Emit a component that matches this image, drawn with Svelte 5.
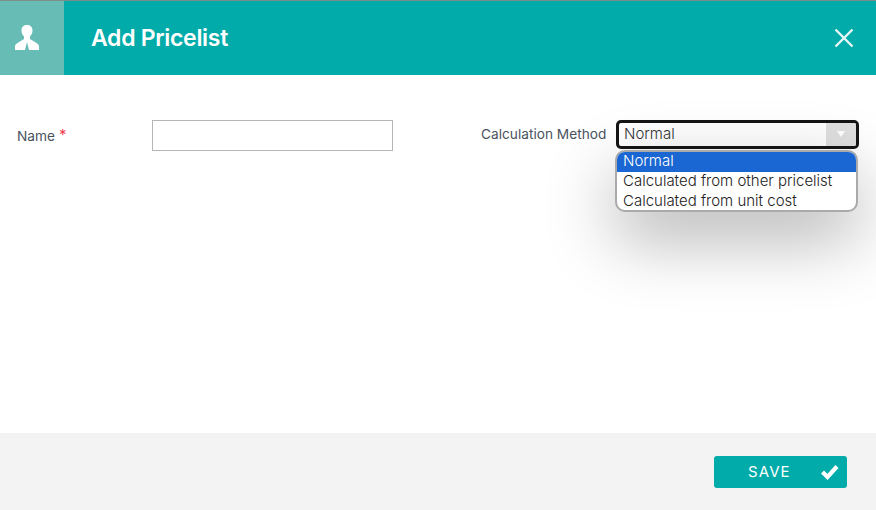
<script lang="ts">
  let options = ['Normal', 'Calculated from other pricelist', 'Calculated from unit cost'];
  let selected = $state('Normal');
</script>

<div class="dialog">
  <header class="head">
    <div class="head-icon">
      <svg width="24" height="25" viewBox="0 0 24 25" aria-hidden="true">
        <path d="M12 0c3.300 0 5.500 2 5.500 5.500 0 2.500-1 4.700-2.500 6v2.500l6.500 4c1.500.9 2.500 2 2.500 3.500V25H14l-2-8-2 8H0v-3.500C0 20 1 18.900 2.500 18L9 14v-2.500c-1.500-1.300-2.500-3.500-2.500-6C6.500 2 8.700 0 12 0z" fill="#fff" />
      </svg>
    </div>
    <h1>Add Pricelist</h1>
    <button class="close" aria-label="Close">
      <svg width="20" height="20" viewBox="0 0 20 20"><path d="M1.500 1.500l17 17M18.500 1.500l-17 17" stroke="#e6f6f5" stroke-width="2.400" fill="none" /></svg>
    </button>
  </header>

  <div class="body">
    <div class="field name">
      <span class="label">Name<span class="req">*</span></span>
      <input type="text" />
    </div>
    <div class="field method">
      <span class="label">Calculation Method</span>
      <div class="select-wrap">
        <div class="select">
          <span class="value">{selected}</span>
          <span class="arrow"><i></i></span>
        </div>
        <ul class="menu">
          {#each options as o}
            <li class:active={o === selected}>{o}</li>
          {/each}
        </ul>
      </div>
    </div>
  </div>

  <footer class="foot">
    <button class="save">
      <span>SAVE</span>
      <svg width="20" height="18" viewBox="0 0 20 18"><path d="M2.500 9l5 5L17 3.500" stroke="#fff" stroke-width="4.200" fill="none" /></svg>
    </button>
  </footer>
</div>

<style>
  :global(body) { margin: 0; background: #fff; }
  .dialog {
    width: 876px; height: 510px; overflow: hidden;
    display: flex; flex-direction: column;
    font-family: Inter, "Open Sans", sans-serif;
    color: #4a5360;
  }
  .head {
    height: 74px; flex: none;
    border-top: 1px solid #7f8c8c;
    background: #00aba9;
    display: flex; align-items: center;
  }
  .head-icon {
    width: 64px; height: 100%; box-sizing: border-box;
    background: #67bcb6; padding-left: 15px; padding-bottom: 1px;
    display: flex; align-items: center;
  }
  h1 { margin: 0 0 0 27px; font-size: 23px; font-weight: 600; letter-spacing: -.3px; color: #fff; flex: 1; }
  .close { border: 0; background: none; padding: 0; margin-right: 22px; height: 20px; }
  .body {
    flex: 1; padding-top: 45px;
    display: flex; align-items: flex-start;
    font-size: 13.7px;
  }
  .field { display: flex; }
  .name { margin-left: 17px; width: 376px; }
  .name .label { width: 135px; padding-top: 6px; }
  .req { color: #f0404a; margin-left: 4px; font-size: 15px; position: relative; top: -1px; }
  input {
    width: 241px; height: 31px; box-sizing: border-box;
    border: 1px solid #b5b5b5; background: #fff; margin: 0;
  }
  .method { margin-left: 88px; }
  .method .label { width: 135px; padding-top: 6px; }
  .select-wrap { position: relative; font-size: 15px; font-weight: 300; }
  .select {
    width: 243px; height: 29px; box-sizing: border-box;
    border: 3px solid #151515; border-radius: 5px;
    display: flex; align-items: center; justify-content: space-between;
    background: #fff; padding-left: 5px; padding-bottom: 2px; color: #333;
    overflow: hidden;
  }
  .arrow {
    width: 30px; height: 30px; background: #e0e0e0;
    display: flex; align-items: center; justify-content: center;
  }
  .arrow i { border: 4px solid transparent; border-top: 6px solid #fff; border-bottom: 0; }
  .menu {
    position: absolute; top: 30px; left: -1px;
    width: 243px; box-sizing: border-box; margin: 0; padding: 0;
    list-style: none; background: #fff; color: #222;
    border: 2px solid #aaa; border-radius: 10px;
    overflow: hidden;
    box-shadow: 0 25px 70px rgba(0, 0, 0, .32);
  }
  .menu li { height: 20px; line-height: 18px; padding-left: 6px; }
  .menu li:last-child { height: 18px; }
  .menu li.active { background: #1a66d2; color: #fff; }
  .foot {
    height: 77px; flex: none; background: #f3f3f3;
    display: flex; align-items: flex-start; justify-content: flex-end;
  }
  .save {
    margin: 23px 29px 0 0; width: 133px; height: 32px;
    background: #00aba9; border: 0; border-radius: 3px; color: #fff;
    font: 400 15px Inter, sans-serif; letter-spacing: 1.1px;
    display: flex; align-items: center; padding: 0 7px 2px 34px;
    justify-content: space-between;
  }
  .save svg { margin-top: 2px; }
</style>
